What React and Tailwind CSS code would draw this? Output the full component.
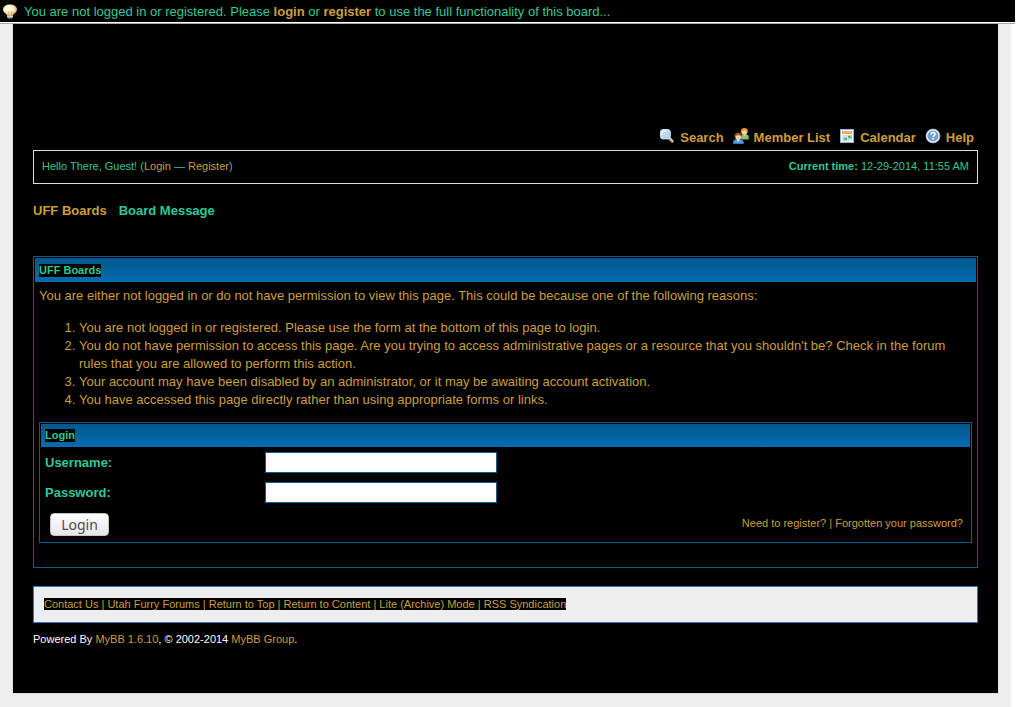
import React, { useState } from "react";

const BulbIcon = () => (
  <svg className="h-4 w-4 shrink-0" viewBox="0 0 16 16" aria-hidden="true">
    <defs>
      <radialGradient id="bulb" cx="42%" cy="40%" r="65%">
        <stop offset="0" stopColor="#ffffff" />
        <stop offset="0.5" stopColor="#fdf0c4" />
        <stop offset="1" stopColor="#d9a04e" />
      </radialGradient>
    </defs>
    <path
      d="M8 0.4C3.8 0.4 1 2.4 1 5.6c0 2 1.4 3.2 2.8 4.2.9.6 1.2 1.3 1.4 2.2h5.6c.2-.9.5-1.6 1.4-2.2 1.4-1 2.8-2.2 2.8-4.2 0-3.2-2.8-5.2-7-5.2z"
      fill="url(#bulb)"
    />
    <path d="M6.6 11.5L6 7.5l1 1 1-1 1 1 1-1-.6 4" fill="none" stroke="#d9a040" strokeWidth="0.7" />
    <path d="M5 11.4h6v1.8L9.6 14.6H6.4L5 13.2z" fill="#a3a39a" />
    <path d="M5 12.4h6" stroke="#f4f4f0" strokeWidth="0.7" />
  </svg>
);

const SearchIcon = () => (
  <svg className="h-4 w-4 shrink-0" viewBox="0 0 16 16" aria-hidden="true">
    <path d="M10 10.2l3.2 3.2" stroke="#8b7c70" strokeWidth="3.2" strokeLinecap="round" />
    <path d="M10.4 9.8l3.2 3.2" stroke="#f0d3ae" strokeWidth="1.5" strokeLinecap="round" />
    <rect x="1.5" y="1.5" width="9.8" height="9.4" rx="2.6" fill="#bcdaf3" stroke="#dbe7f5" />
    <path d="M3 6.6V4.4C3 3.5 3.6 3 4.4 3H7" fill="none" stroke="#e8f5ff" strokeWidth="1.4" />
    <path d="M10.2 5v3.2c0 1-.6 1.6-1.6 1.6H5" fill="none" stroke="#9cc3ea" strokeWidth="1" />
  </svg>
);

const MembersIcon = () => (
  <svg className="h-4 w-4 shrink-0" viewBox="0 0 16 16" aria-hidden="true">
    <path d="M7.5 11.2V8.8C8 7 9.2 6.3 11.5 6.3S15.4 7 15.8 8.8v2.4z" fill="#86c873" stroke="#4b9440" strokeWidth="0.7" />
    <path d="M10.3 6.5h2.6l-1.3 2z" fill="#f7d9b8" />
    <circle cx="11.3" cy="3.7" r="3" fill="#f8d3a2" />
    <path d="M7.8 4.7C7.4 1.5 8.9 0 11.4 0c2.6 0 3.9 1.5 3.3 4.6l-1.1-.9-.6-1.6-2.7.7-1.1.8z" fill="#f4911f" />
    <path d="M.3 15.7V14c.4-1.8 1.8-2.9 4.8-2.9s4.8 1.1 5.3 2.9v1.7z" fill="#519be5" stroke="#3a7dca" strokeWidth="0.7" />
    <path d="M3.6 11.2h3L5.1 14z" fill="#fff" />
    <circle cx="5.2" cy="8.6" r="3.1" fill="#f6cda9" />
    <path d="M1.7 9.2C1.2 6.2 2.6 4.8 5.2 4.8s4.1 1.6 3.4 4.4l-1-1.5-3.2-.7L3 8.2z" fill="#9c571f" />
  </svg>
);

const CalendarIcon = () => (
  <svg className="h-4 w-4 shrink-0" viewBox="0 0 16 16" aria-hidden="true">
    <rect x="1.5" y="1.5" width="13" height="13" fill="#f6f9fc" stroke="#8fb3dc" />
    <rect x="3" y="3" width="10" height="3" fill="#eea052" />
    <path d="M5 3v2M7 3v2M9 3v2M11 3v2" stroke="#ffd9a8" strokeWidth="0.8" />
    <path d="M3 8h10M3 10h10M3 12h10M5 7v6.5M7.5 7v6.5M10 7v6.5" stroke="#c3cedb" strokeWidth="0.8" />
    <path d="M9 7.5h4v3H9zM4.5 9.5H8v3H4.5z" fill="#8cc789" />
    <path d="M9.5 8h1.5v1.5H9.5zM6.5 10H8v1.5H6.5z" fill="#3e8a4d" />
  </svg>
);

const HelpIcon = () => (
  <svg className="h-4 w-4 shrink-0" viewBox="0 0 16 16" aria-hidden="true">
    <circle cx="8" cy="8" r="6.9" fill="#e8f1fa" stroke="#b4c6da" strokeWidth="0.9" />
    <circle cx="8" cy="8" r="5" fill="#6d9fd6" stroke="#5587c2" strokeWidth="0.7" />
    <path
      d="M6 6.4C6 5.2 6.9 4.5 8 4.5s2.1.6 2.1 1.8c0 1.3-2 1.3-2 2.7"
      fill="none"
      stroke="#fff"
      strokeWidth="1.5"
    />
    <rect x="7.3" y="10" width="1.6" height="1.6" fill="#fff" />
  </svg>
);

const menuItems = [
  { label: "Search", icon: <SearchIcon /> },
  { label: "Member List", icon: <MembersIcon /> },
  { label: "Calendar", icon: <CalendarIcon /> },
  { label: "Help", icon: <HelpIcon /> },
];

const footerLinks = [
  "Contact Us",
  "Utah Furry Forums",
  "Return to Top",
  "Return to Content",
  "Lite (Archive) Mode",
  "RSS Syndication",
];

const Link = ({ children, className = "" }) => (
  <a href="#" className={`text-[#cc9e3c] ${className}`}>
    {children}
  </a>
);

const PanelTitle = ({ children, className = "h-6" }) => (
  <h2
    className={`flex items-center bg-linear-to-b from-[#03578c] to-[#026cb1] px-1 text-[11px] leading-[13px] font-bold ${className}`}
  >
    <span className="bg-black">{children}</span>
  </h2>
);

const LoginForm = () => {
  const [username, setUsername] = useState("");
  const [password, setPassword] = useState("");

  return (
    <form
      onSubmit={(e) => e.preventDefault()}
      className="border border-[#0f5c8e] p-px"
    >
      <PanelTitle className="h-[23px]">Login</PanelTitle>
      <div className="grid grid-cols-[220px_1fr] items-center gap-y-[9px] px-1 pt-[5px] font-bold">
        <label htmlFor="username">Username:</label>
        <input
          id="username"
          type="text"
          value={username}
          onChange={(e) => setUsername(e.target.value)}
          className="h-[21px] w-[232px] border border-[#0f5c8e] bg-white px-1 font-normal text-black"
        />
        <label htmlFor="password">Password:</label>
        <input
          id="password"
          type="password"
          value={password}
          onChange={(e) => setPassword(e.target.value)}
          className="h-[21px] w-[232px] border border-[#0f5c8e] bg-white px-1 font-normal text-black"
        />
      </div>
      <div className="flex items-start justify-between pt-[10px] pr-[7px] pb-[5px] pl-[9px]">
        <button
          type="submit"
          className="h-[23px] w-[59px] rounded-[4px] border border-[#c4c4c4] bg-linear-to-b from-white to-[#e6e6e6] font-['Noto_Sans',sans-serif] text-sm leading-[18px] text-[#4c4c4c]"
        >
          Login
        </button>
        <p className="text-[11px] leading-5 text-[#cc9e3c]">
          <Link>Need to register?</Link> | <Link>Forgotten your password?</Link>
        </p>
      </div>
    </form>
  );
};

const App = () => {
  return (
    <div className="flex min-h-screen flex-col bg-white font-['Liberation_Sans',Arial,sans-serif] text-[13px] leading-[18px] text-[#2fc993]">
      <div className="mr-[9px] flex h-6 items-center gap-1.5 border-b border-[#a9a9a9] bg-black pl-0.5 shadow-[inset_0_-1px_0_#fff]">
        <BulbIcon />
        <p>
          You are not logged in or registered. Please{" "}
          <Link className="font-bold">login</Link> or{" "}
          <Link className="font-bold">register</Link> to use the full
          functionality of this board...
        </p>
      </div>

      <div className="mr-[13px] grow bg-[#eee] px-3 pb-[13px]">
        <div className="border border-t-0 border-[#ddd] bg-black px-5 pt-[104px] pb-[45px]">
          <nav className="mr-1 flex justify-end gap-[9px] leading-5 font-bold">
            {menuItems.map((item) => (
              <a
                key={item.label}
                href="#"
                className="flex items-start gap-[5px] text-[#cc9e3c]"
              >
                {item.icon}
                <span>{item.label}</span>
              </a>
            ))}
          </nav>

          {/* Welcome bar */}
          <div className="mt-0.5 flex justify-between border border-[#ddd] px-2 pt-1.5 pb-2 text-[11px]">
            <p>
              Hello There, Guest! (<Link>Login</Link> — <Link>Register</Link>)
            </p>
            <p>
              <strong>Current time:</strong> 12-29-2014, 11:55 AM
            </p>
          </div>

          <div className="mt-[18px] flex gap-3 font-bold">
            <Link>UFF Boards</Link>
            <span>Board Message</span>
          </div>

          {/* Board message */}
          <main className="mt-9 border border-[#0f5c8e] p-px pb-6">
            <PanelTitle>UFF Boards</PanelTitle>
            <div className="px-1 pt-[5px] text-[#cc9e3c]">
              <p>
                You are either not logged in or do not have permission to view
                this page. This could be because one of the following reasons:
              </p>
              <ol className="mt-[14px] mb-[13px] list-decimal pl-10">
                <li>
                  You are not logged in or registered. Please use the form at
                  the bottom of this page to login.
                </li>
                <li>
                  You do not have permission to access this page. Are you trying
                  to access administrative pages or a resource that you
                  shouldn't be? Check in the forum rules that you are allowed to
                  perform this action.
                </li>
                <li>
                  Your account may have been disabled by an administrator, or it
                  may be awaiting account activation.
                </li>
                <li>
                  You have accessed this page directly rather than using
                  appropriate forms or links.
                </li>
              </ol>
              <div className="text-[#2fc993]">
                <LoginForm />
              </div>
            </div>
          </main>

          <footer className="mt-[18px] text-[11px]">
            <div className="border border-[#3d76b0] bg-[#eee] px-[10px] pt-2 pb-[9px]">
              <span className="bg-black text-[#cc9e3c]">
                {footerLinks.map((label, i) => (
                  <React.Fragment key={label}>
                    {i > 0 && " | "}
                    <Link>{label}</Link>
                  </React.Fragment>
                ))}
              </span>
            </div>
            <p className="mt-[7px] text-white">
              Powered By <Link>MyBB 1.6.10</Link>, © 2002-2014{" "}
              <Link>MyBB Group</Link>.
            </p>
          </footer>
        </div>
      </div>
    </div>
  );
};

export default App;
